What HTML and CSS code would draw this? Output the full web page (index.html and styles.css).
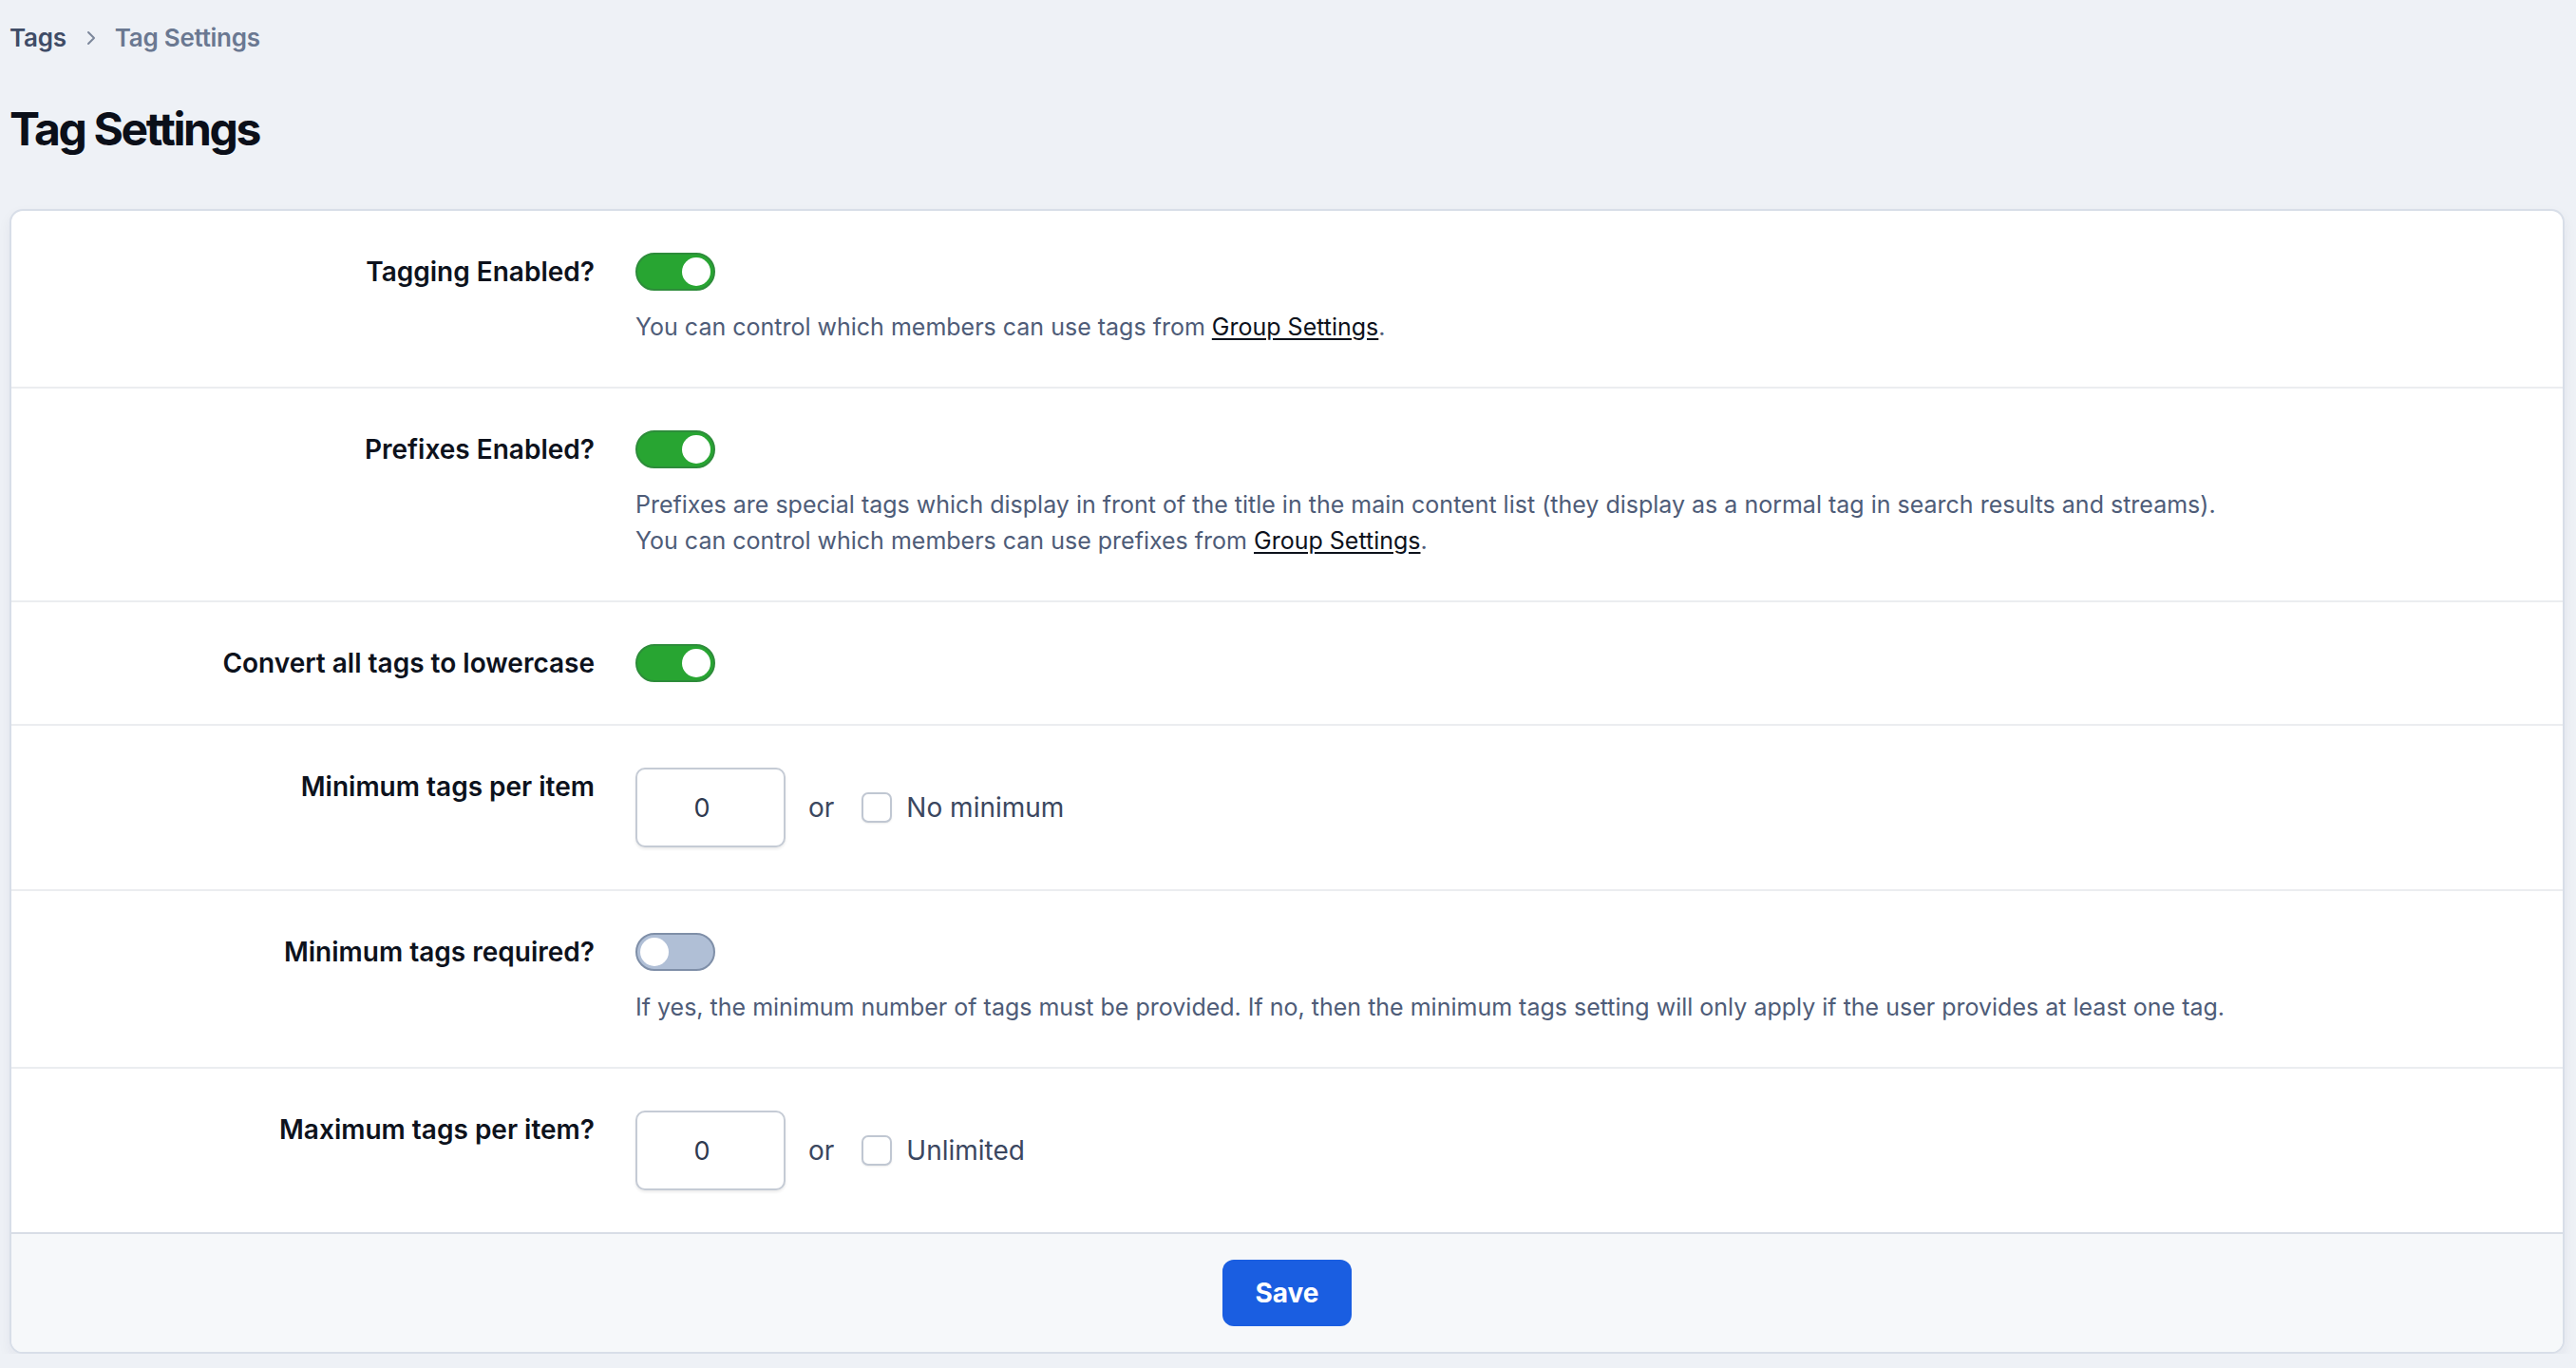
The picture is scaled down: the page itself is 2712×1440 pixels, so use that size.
FILE: index.html
```html
<!DOCTYPE html>
<html lang="en">

<head>
    <meta charset="UTF-8">
    <meta name="viewport" content="width=device-width, initial-scale=1.0">
    <title>Tag Settings</title>
    <link rel="stylesheet" href="styles.css">
</head>

<body>
    <div class="page">
        <nav class="breadcrumb">
            <a href="#" class="crumb">Tags</a>
            <svg class="crumb-sep" width="10" height="16" viewBox="0 0 10 16">
                <path d="M2 2 L8 8 L2 14" fill="none" stroke="currentColor" stroke-width="2" stroke-linecap="round" stroke-linejoin="round" />
            </svg>
            <span class="crumb current">Tag Settings</span>
        </nav>

        <h1 class="page-title">Tag Settings</h1>

        <form class="settings-card">
            <div class="setting-row">
                <label class="setting-label">Tagging Enabled?</label>
                <div class="setting-field">
                    <span class="toggle on"><span class="knob"></span></span>
                    <p class="setting-desc">You can control which members can use tags from <a href="#">Group Settings</a>.</p>
                </div>
            </div>

            <div class="setting-row">
                <label class="setting-label">Prefixes Enabled?</label>
                <div class="setting-field">
                    <span class="toggle on"><span class="knob"></span></span>
                    <p class="setting-desc">Prefixes are special tags which display in front of the title in the main content list (they display as a normal tag in search results and streams).<br>You can control which members can use prefixes from <a href="#">Group Settings</a>.</p>
                </div>
            </div>

            <div class="setting-row">
                <label class="setting-label">Convert all tags to lowercase</label>
                <div class="setting-field">
                    <span class="toggle on"><span class="knob"></span></span>
                </div>
            </div>

            <div class="setting-row">
                <label class="setting-label" for="minTags">Minimum tags per item</label>
                <div class="setting-field inline">
                    <input type="text" id="minTags" class="num-input" value="0">
                    <span class="or">or</span>
                    <label class="check">
                        <input type="checkbox">
                        <span>No minimum</span>
                    </label>
                </div>
            </div>

            <div class="setting-row">
                <label class="setting-label">Minimum tags required?</label>
                <div class="setting-field">
                    <span class="toggle"><span class="knob"></span></span>
                    <p class="setting-desc">If yes, the minimum number of tags must be provided. If no, then the minimum tags setting will only apply if the user provides at least one tag.</p>
                </div>
            </div>

            <div class="setting-row last">
                <label class="setting-label" for="maxTags">Maximum tags per item?</label>
                <div class="setting-field inline">
                    <input type="text" id="maxTags" class="num-input" value="0">
                    <span class="or">or</span>
                    <label class="check">
                        <input type="checkbox">
                        <span>Unlimited</span>
                    </label>
                </div>
            </div>

            <div class="form-footer">
                <button type="button" class="save-btn">Save</button>
            </div>
        </form>
    </div>
</body>

</html>
```

FILE: styles.css
```css
body {
    margin: 0;
    padding: 0;
    background-color: #eef1f6;
    font-family: 'Inter', 'Noto Sans', sans-serif;
    color: #0d121c;
}

.page {
    padding: 0 12px 0 10px;
}

.breadcrumb {
    display: flex;
    align-items: center;
    padding-top: 20px;
    height: 40px;
    font-size: 26px;
    font-weight: 600;
    line-height: 40px;
    letter-spacing: -0.25px;
}

.crumb {
    color: #3f4c66;
    text-decoration: none;
}

.crumb.current {
    color: #6a7891;
}

.crumb-sep {
    color: #7c879b;
    margin: 0 20px 0 21px;
}

.page-title {
    margin: 47px 0 55px 0;
    font-size: 48px;
    font-weight: 700;
    line-height: 58px;
    color: #0b0f19;
    letter-spacing: -2.4px;
}

.settings-card {
    background-color: #fff;
    border: 2px solid #d8dee8;
    border-radius: 14px;
    overflow: hidden;
    box-shadow: 0 6px 14px rgba(30, 40, 60, 0.06);
}

.setting-row {
    display: grid;
    grid-template-columns: 614px 1fr;
    column-gap: 43px;
    padding: 44px 0;
    border-bottom: 2px solid #ebedf0;
}

.setting-row.last {
    border-bottom: none;
}

.setting-label {
    text-align: right;
    font-size: 28px;
    font-weight: 600;
    line-height: 40px;
    color: #0d121c;
}

.setting-field {
    display: flex;
    flex-direction: column;
    align-items: flex-start;
}

.setting-field.inline {
    flex-direction: row;
    align-items: center;
}

.setting-desc {
    margin: 19px 0 0 0;
    font-size: 25px;
    line-height: 38px;
    color: #4e5c78;
}

.setting-desc a {
    color: #0d121c;
    text-decoration: underline;
    text-underline-offset: 3px;
}

/* toggle switch */
.toggle {
    display: block;
    position: relative;
    width: 84px;
    height: 40px;
    box-sizing: border-box;
    border: 2px solid #7f8fa8;
    border-radius: 20px;
    background-color: #b0bfd6;
}

.toggle .knob {
    position: absolute;
    top: 3px;
    left: 3px;
    width: 30px;
    height: 30px;
    border-radius: 50%;
    background-color: #fff;
}

.toggle.on {
    background-color: #28a532;
    border-color: #2d8c3a;
}

.toggle.on .knob {
    left: auto;
    right: 3px;
}

.num-input {
    width: 158px;
    height: 84px;
    box-sizing: border-box;
    padding: 0 18px 0 0;
    border: 2px solid #c5cbd5;
    border-radius: 10px;
    box-shadow: 0 2px 3px rgba(0, 0, 0, 0.08);
    font-family: 'Inter', sans-serif;
    font-size: 27px;
    text-align: center;
    color: #2f3a4f;
    background: #fff;
}

.or {
    margin-left: 24px;
    font-size: 28px;
    color: #3b4760;
}

.check {
    display: flex;
    align-items: center;
    margin-left: 29px;
    font-size: 28px;
    color: #3b4760;
}

.check input {
    appearance: none;
    -webkit-appearance: none;
    width: 32px;
    height: 32px;
    margin: 0 15px 0 0;
    border: 2px solid #c0c7d2;
    border-radius: 7px;
    background: #fff;
    box-shadow: 0 1px 2px rgba(0, 0, 0, 0.08);
}

.form-footer {
    display: flex;
    justify-content: center;
    padding: 27px 0;
    background-color: #f6f8fa;
    border-top: 2px solid #d8dde6;
}

.save-btn {
    width: 136px;
    height: 70px;
    border: none;
    border-radius: 12px;
    background-color: #1a5ee1;
    color: #fff;
    font-family: 'Inter', sans-serif;
    font-size: 28px;
    font-weight: 700;
    cursor: pointer;
}
```
